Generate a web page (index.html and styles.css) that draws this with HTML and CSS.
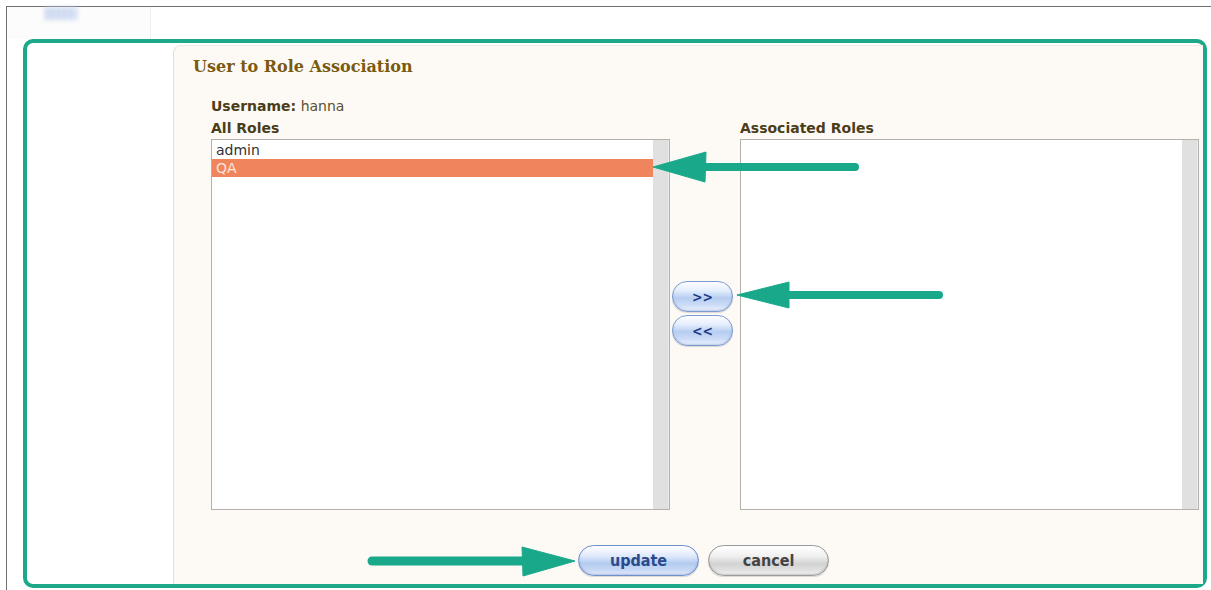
FILE: index.html
```html
<!DOCTYPE html>
<html lang="en">
<head>
    <meta charset="UTF-8">
    <title>User to Role Association</title>
    <link rel="stylesheet" href="styles.css">
</head>
<body>
    <div class="page">
        <div class="topbar">
            <div class="topbar-left">
                <div class="logo"></div>
            </div>
        </div>

        <div class="frame">
            <div class="sidebar"></div>

            <div class="panel">
                <h1>User to Role Association</h1>

                <div class="assoc">
                    <div class="username"><b>Username:</b> hanna</div>

                    <div class="lists">
                        <label>All Roles</label>
                        <div></div>
                        <label>Associated Roles</label>

                        <div class="listbox">
                            <ul>
                                <li>admin</li>
                                <li class="selected">QA</li>
                            </ul>
                            <div class="scrollbar"></div>
                        </div>

                        <div class="movers">
                            <button type="button" class="btn-move">&gt;&gt;</button>
                            <button type="button" class="btn-move">&lt;&lt;</button>
                        </div>

                        <div class="listbox">
                            <ul></ul>
                            <div class="scrollbar"></div>
                        </div>
                    </div>

                    <div class="actions">
                        <button type="button" class="btn btn-update">update</button>
                        <button type="button" class="btn btn-cancel">cancel</button>
                    </div>
                </div>
            </div>
        </div>
    </div>

    <!-- annotation arrows drawn over the screenshot -->
    <svg class="arrows" width="1211" height="590" viewBox="0 0 1211 590">
        <g fill="#19a98a" stroke="#19a98a">
            <line x1="700" y1="167" x2="855" y2="167" stroke-width="8" stroke-linecap="round"/>
            <polygon points="653,167 706,152 705,182" stroke-width="1" stroke-linejoin="round"/>

            <line x1="782" y1="295" x2="939" y2="295" stroke-width="8" stroke-linecap="round"/>
            <polygon points="737,295 789,282 789,308" stroke-width="1" stroke-linejoin="round"/>

            <line x1="372" y1="561" x2="528" y2="561" stroke-width="9" stroke-linecap="round"/>
            <polygon points="575,561 522,547 523,576" stroke-width="1" stroke-linejoin="round"/>
        </g>
    </svg>
</body>
</html>
```

FILE: styles.css
```css
body {
    margin: 0;
    background-color: #ffffff;
    font-family: "DejaVu Sans", "Liberation Sans", sans-serif;
    position: relative;
    width: 1211px;
    height: 590px;
    overflow: hidden;
}

.page {
    margin: 6px 0 0 6px;
    border-left: 1px solid #707070;
    border-top: 1px solid #707070;
    height: 600px;
}

.topbar {
    height: 32px;
    display: flex;
}

.topbar-left {
    width: 143px;
    border-right: 1px solid #f0f0f0;
    background-color: #fcfcfc;
}

.logo {
    margin-left: 38px;
    width: 32px;
    height: 13px;
    background: repeating-linear-gradient(90deg, #a9bde6 0, #a9bde6 3px, #e2e9f7 3px, #e2e9f7 6px);
    filter: blur(2px);
    opacity: 0.75;
}

.frame {
    margin-left: 16px;
    width: 1184px;
    height: 549px;
    box-sizing: border-box;
    border: 4px solid #1ba98a;
    border-radius: 10px;
    padding-top: 2px;
    display: flex;
    background-color: #ffffff;
}

.sidebar {
    width: 146px;
}

.panel {
    flex: 1;
    background-color: #fdfaf6;
    border-left: 1px solid #e6e0da;
    border-top: 1px solid #efe9e3;
    border-top-left-radius: 8px;
    padding-left: 19px;
}

h1 {
    margin: 11px 0 0 0;
    font-family: "DejaVu Serif", "Liberation Serif", serif;
    font-size: 16px;
    line-height: 20px;
    color: #7a5a0e;
}

.assoc {
    margin-left: 18px;
    margin-top: 20px;
}

.username {
    font-size: 14px;
    line-height: 18px;
    color: #5b5030;
}

.username b {
    color: #4a3d18;
}

.lists {
    display: grid;
    grid-template-columns: 459px 70px 459px;
    margin-top: 5px;
}

label {
    font-size: 14px;
    font-weight: bold;
    line-height: 16px;
    margin-bottom: 3px;
    color: #4a3d18;
}

.listbox {
    height: 371px;
    box-sizing: border-box;
    border: 1px solid #b4b0ac;
    background-color: #ffffff;
    display: flex;
}

.listbox ul {
    flex: 1;
    list-style: none;
    margin: 0;
    padding: 1px 0 0 0;
}

.listbox li {
    font-size: 14px;
    line-height: 18px;
    padding-left: 4px;
    color: #333333;
}

.listbox li.selected {
    background-color: #f0845c;
    color: #fde6da;
}

.scrollbar {
    width: 15px;
    background-color: #e0e0e0;
    border-right: 1px solid #ececec;
}

.movers {
    display: flex;
    flex-direction: column;
    justify-content: center;
    align-items: center;
    gap: 3px;
    padding-bottom: 22px;
    padding-right: 5px;
}

.btn-move {
    width: 61px;
    height: 31px;
    box-sizing: border-box;
    border: 1px solid #7d9dd2;
    border-radius: 15px;
    background: linear-gradient(#ffffff 0%, #e3edfc 30%, #b6cdf1 55%, #cddcf7 80%, #eef4fe 100%);
    box-shadow: inset 0 -1px 2px rgba(90, 120, 180, 0.35), 0 1px 1px rgba(0, 0, 0, 0.15);
    color: #1d3c86;
    font-family: "Liberation Sans Narrow", "DejaVu Sans Condensed", "DejaVu Sans", sans-serif;
    font-weight: bold;
    font-size: 14px;
    padding: 0;
}

.actions {
    display: flex;
    gap: 9px;
    margin-top: 35px;
    padding-left: 367px;
}

.btn {
    width: 121px;
    height: 31px;
    box-sizing: border-box;
    border-radius: 16px;
    font-family: "Liberation Sans Narrow", "DejaVu Sans Condensed", "DejaVu Sans", sans-serif;
    font-weight: bold;
    font-size: 16px;
    padding: 0;
}

.btn-update {
    border: 1px solid #6e90cc;
    background: linear-gradient(#ffffff 0%, #dfe9fb 35%, #b3cbef 60%, #c9daf6 85%, #edf3fe 100%);
    box-shadow: inset 0 -1px 2px rgba(80, 110, 180, 0.4), 0 1px 1px rgba(0, 0, 0, 0.15);
    color: #2a4a8c;
}

.btn-cancel {
    border: 1px solid #9a9a9a;
    background: linear-gradient(#ffffff 0%, #f0f0f0 35%, #d2d2d2 62%, #e2e2e2 85%, #f6f6f6 100%);
    box-shadow: inset 0 -1px 2px rgba(0, 0, 0, 0.2), 0 1px 1px rgba(0, 0, 0, 0.15);
    color: #444444;
}

.arrows {
    position: absolute;
    top: 0;
    left: 0;
    pointer-events: none;
}
```
